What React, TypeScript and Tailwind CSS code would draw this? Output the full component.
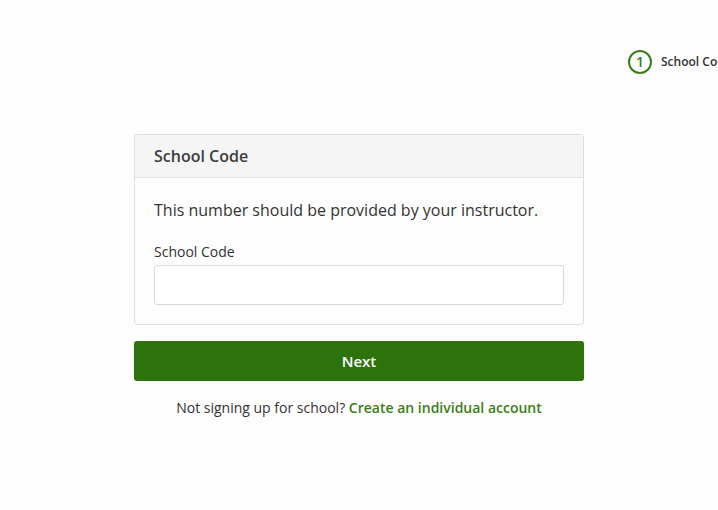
import React from "react";

export default function App() {
  return (
    <div
      className="w-[718px] h-[510px] overflow-hidden bg-[#fdfdfd] text-[#333]"
      style={{ fontFamily: '"Open Sans", "Noto Sans", sans-serif' }}
    >
      {/* step indicator */}
      <div className="flex items-center pt-[50px] pl-[628px] whitespace-nowrap">
        <div className="w-[24px] h-[24px] shrink-0 rounded-full border-2 border-[#3b7d17] flex items-center justify-center text-[14px] font-semibold text-[#3b7d17] leading-none">
          1
        </div>
        <span className="ml-[9px] text-[12px] font-semibold text-[#333]">School Code</span>
      </div>

      <div className="w-[450px] mx-auto mt-[60px]">
        <div className="border border-[#dedede] rounded-[3px] bg-[#fdfdfd]">
          <div className="h-[43px] flex items-center px-[19px] bg-[#f5f5f5] border-b border-[#e3e3e3] rounded-t-[3px]">
            <h2 className="text-[16px] font-semibold text-[#3d3d3d] -mt-[1px]">School Code</h2>
          </div>
          <div className="px-[19px] pt-[21px] pb-[19px]">
            <p className="text-[16px] leading-[22px] text-[#333]">
              This number should be provided by your instructor.
            </p>
            <label className="block mt-[21px] text-[14px] leading-[20px] text-[#333]">School Code</label>
            <input
              type="text"
              className="mt-[3px] w-full h-[40px] border border-[#d9d9d9] rounded-[3px] bg-white px-3 outline-none"
            />
          </div>
        </div>

        <button className="mt-[16px] w-full h-[40px] rounded-[3px] bg-[#2e720c] text-white text-[15px] font-semibold">
          Next
        </button>

        <p className="mt-[16px] text-center text-[14px] text-[#333]">
          Not signing up for school?{" "}
          <a className="font-semibold text-[#3b7d17]">Create an individual account</a>
        </p>
      </div>
    </div>
  );
}
